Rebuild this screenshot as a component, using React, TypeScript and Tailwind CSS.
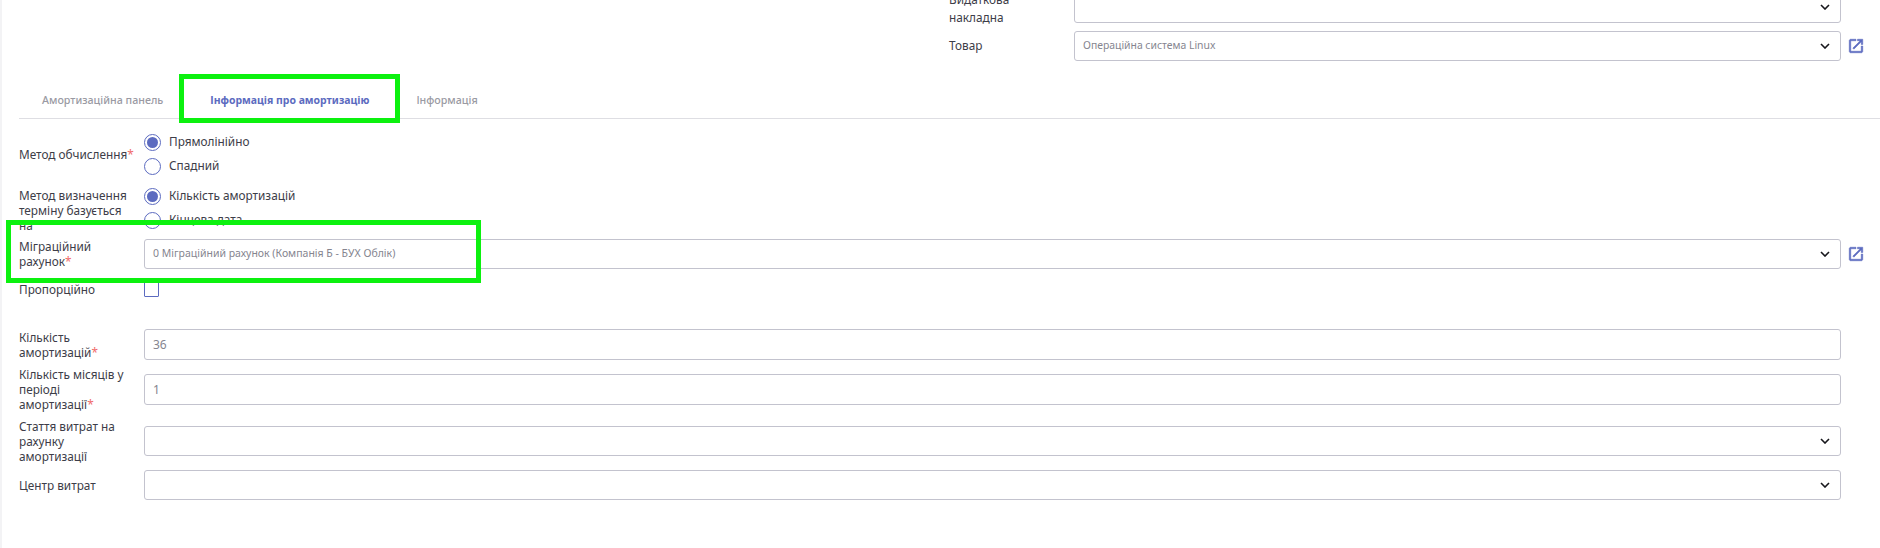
function Chevron() {
  return (
    <svg width="10" height="6" viewBox="0 0 10 6" fill="none" className="absolute right-[10px] top-1/2 -translate-y-1/2">
      <path d="M1 1L5 5L9 1" stroke="#17171c" strokeWidth="1.6" />
    </svg>
  );
}

function OpenIcon() {
  return (
    <svg width="18" height="18" viewBox="0 0 24 24" fill="#5c6bc0" stroke="#5c6bc0" strokeWidth="0.7" className="ml-[6px] shrink-0">
      <path d="M19 19H5V5h7V3H5c-1.11 0-2 .9-2 2v14c0 1.1.89 2 2 2h14c1.1 0 2-.9 2-2v-7h-2v7zM14 3v2h3.59l-9.83 9.83 1.41 1.41L19 6.41V10h2V3h-7z" />
    </svg>
  );
}

function Field({ value, select, h = "h-[30px]", icon, text = "text-[10.5px]" }: { value?: string; select?: boolean; h?: string; icon?: boolean; text?: string }) {
  return (
    <div className="flex items-center">
      <div className={`relative ${h} w-[1697px] shrink-0 rounded-[3px] border border-[#c3c3ce] bg-white flex items-center pl-[8px] ${text} text-[#85858f]`}>
        {value}
        {select && <Chevron />}
      </div>
      {icon && <OpenIcon />}
    </div>
  );
}

function Req() {
  return <span className="text-[#f06a6a]">*</span>;
}

function Label({ children }: { children: React.ReactNode }) {
  return <div className="w-[125px] shrink-0 leading-[15px] text-[11.8px] text-[#3d3d48]">{children}</div>;
}

function Radio({ label, checked }: { label: string; checked?: boolean }) {
  return (
    <div className="flex h-[24px] items-center gap-[8px] text-[11.8px] text-[#3d3d48]">
      <span className="flex h-[17px] w-[17px] items-center justify-center rounded-full border border-[#5c6bc0] bg-white">
        {checked && <span className="h-[11px] w-[11px] rounded-full bg-[#5c6bc0]" />}
      </span>
      {label}
    </div>
  );
}

export default function App() {
  return (
    <div className="relative h-[548px] w-[1880px] overflow-hidden border-l-2 border-[#f3f3f5] bg-white font-['Noto_Sans','Open_Sans',sans-serif]">
      {/* top fields */}
      <div className="ml-[947px] -mt-[10px] flex flex-col gap-[7px]">
        <div className="flex h-[34px] items-center">
          <div className="w-[125px] shrink-0 pt-[2px] leading-[18px] text-[11.8px] text-[#3d3d48]">Видаткова<br />накладна</div>
          <div className="relative h-[31px] w-[767px] rounded-[3px] border border-[#c3c3ce] bg-white"><Chevron /></div>
        </div>
        <div className="flex items-center">
          <div className="w-[125px] shrink-0 text-[11.8px] text-[#3d3d48]">Товар</div>
          <div className="relative flex h-[30px] w-[767px] items-center rounded-[3px] border border-[#c3c3ce] bg-white pl-[8px] text-[10.4px] text-[#85858f]">
            Операційна система Linux
            <Chevron />
          </div>
          <OpenIcon />
        </div>
      </div>

      {/* tabs */}
      <div className="ml-[17px] mt-[29px] flex h-[29px] items-center border-b border-[#dedee3] pb-[7px] text-[10.7px] font-medium text-[#9a9aa3]">
        <span className="ml-[23px]">Амортизаційна панель</span>
        <span className="ml-[47px] text-[10.45px] font-bold text-[#5c6bc0]">Інформація про амортизацію</span>
        <span className="ml-[47px]">Інформація</span>
      </div>

      {/* form */}
      <div className="ml-[17px] mt-[11px] flex flex-col">
        <div className="flex h-[48px] items-center">
          <Label>Метод обчислення<Req /></Label>
          <div className="flex flex-col">
            <Radio label="Прямолінійно" checked />
            <Radio label="Спадний" />
          </div>
        </div>
        <div className="mt-[6px] flex h-[52px] items-center">
          <Label>Метод визначення<br />терміну базується<br />на</Label>
          <div className="flex h-full flex-col">
            <Radio label="Кількість амортизацій" checked />
            <Radio label="Кінцева дата" />
          </div>
        </div>
        <div className="relative flex h-[36px] items-center bg-white">
          <Label>Міграційний<br />рахунок<Req /></Label>
          <Field value="0 Міграційний рахунок (Компанія Б - БУХ Облік)" select icon />
        </div>
        <div className="flex h-[34px] items-center">
          <Label>Пропорційно</Label>
          <span className="h-[15px] w-[15px] rounded-[1px] border border-[#5c6bc0] bg-white" />
        </div>
        <div className="mt-[23px] flex h-[31px] items-center">
          <Label>Кількість<br />амортизацій<Req /></Label>
          <Field value="36" h="h-[31px]" text="text-[12px]" />
        </div>
        <div className="mt-[14px] flex h-[31px] items-center">
          <Label>Кількість місяців у<br />періоді<br />амортизації<Req /></Label>
          <Field value="1" h="h-[31px]" text="text-[12px]" />
        </div>
        <div className="mt-[21px] flex h-[30px] items-center">
          <Label>Стаття витрат на<br />рахунку<br />амортизації</Label>
          <Field select />
        </div>
        <div className="mt-[14px] flex h-[30px] items-center">
          <Label>Центр витрат</Label>
          <Field select />
        </div>
      </div>

      {/* annotation highlights */}
      <div className="absolute left-[177px] top-[74px] h-[49px] w-[221px] border-[5px] border-[#0cf10f]" />
      <div className="absolute left-[4px] top-[220px] h-[63px] w-[475px] border-[5px] border-[#0cf10f]" />
    </div>
  );
}
